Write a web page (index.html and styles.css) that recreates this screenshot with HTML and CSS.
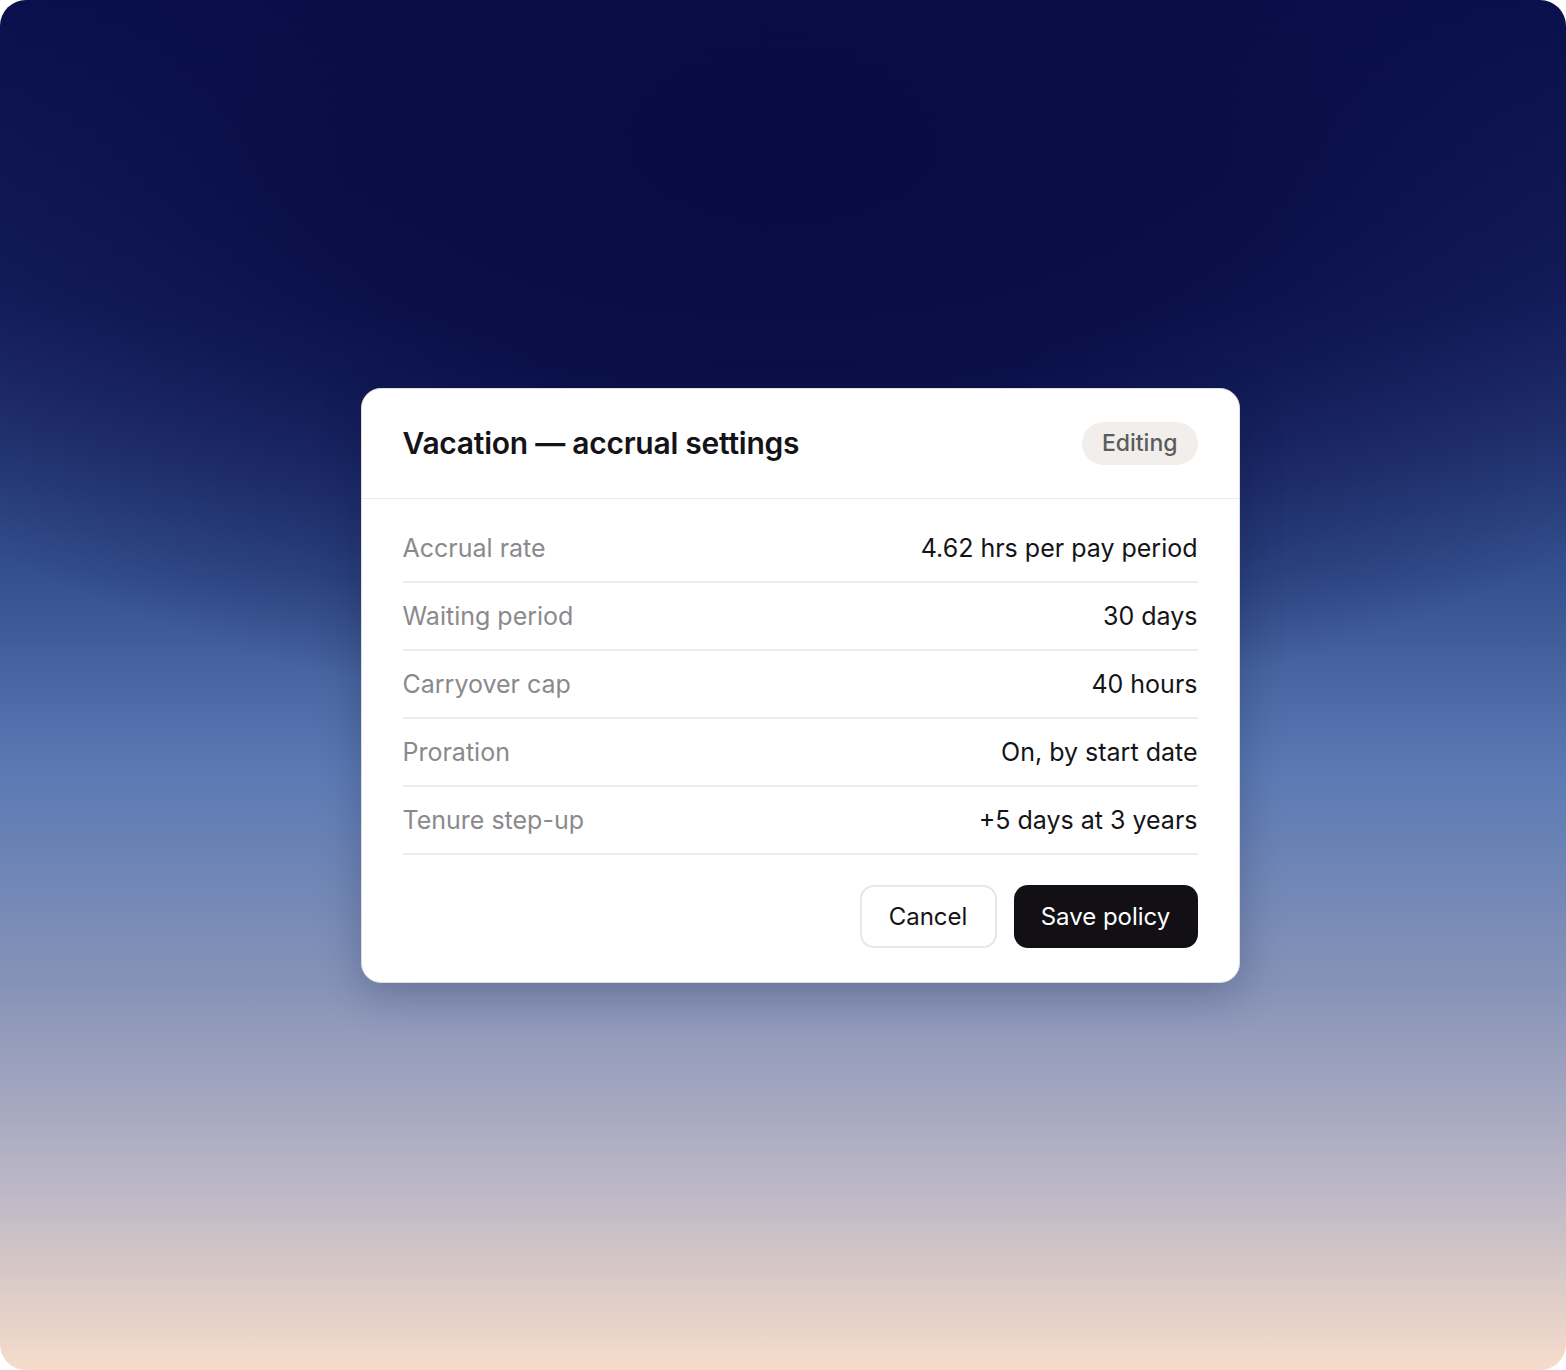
FILE: index.html
```html
<!DOCTYPE html>
<html>
<head>
<meta charset="utf-8">
<link rel="stylesheet" href="styles.css">
</head>
<body>
<div class="frame">
  <div class="card">
    <div class="card-header">
      <h1 class="title">Vacation — accrual settings</h1>
      <span class="badge">Editing</span>
    </div>
    <div class="card-body">
      <div class="row"><span class="label">Accrual rate</span><span class="value">4.62 hrs per pay period</span></div>
      <div class="row"><span class="label">Waiting period</span><span class="value">30 days</span></div>
      <div class="row"><span class="label">Carryover cap</span><span class="value">40 hours</span></div>
      <div class="row"><span class="label">Proration</span><span class="value">On, by start date</span></div>
      <div class="row"><span class="label">Tenure step-up</span><span class="value">+5 days at 3 years</span></div>
      <div class="actions">
        <button class="btn btn-secondary">Cancel</button>
        <button class="btn btn-primary">Save policy</button>
      </div>
    </div>
  </div>
</div>
</body>
</html>
```
FILE: styles.css
```css
html, body {
  margin: 0;
  padding: 0;
  background: #ffffff;
}
body {
  font-family: Inter, "Noto Sans", sans-serif;
}
.frame {
  width: 1566px;
  height: 1370px;
  border-radius: 26px;
  overflow: hidden;
  display: flex;
  align-items: center;
  justify-content: center;
  background:
    radial-gradient(ellipse 1100px 560px at 50% 12%, rgba(8,12,70,1) 0%, rgba(8,12,70,0.9) 40%, rgba(8,12,70,0) 100%),
    linear-gradient(180deg, #0b1250 0%, #1a2663 22%, #34508e 42%, #5a79b3 56%, #8693b8 72%, #b9b5c5 86%, #f6dccb 100%);
}
.card {
  width: 879px;
  background: #ffffff;
  border: 1px solid #e2ddd9;
  border-radius: 20px;
  box-shadow: 0 12px 40px rgba(10, 20, 60, 0.25);
  box-sizing: border-box;
  margin-left: 34px;
}
.card-header {
  height: 110px;
  box-sizing: border-box;
  padding: 0 41px 0 41px;
  display: flex;
  align-items: center;
  justify-content: space-between;
  border-bottom: 1px solid #efeae7;
}
.title {
  margin: 0;
  font-size: 30px;
  font-weight: 600;
  color: #141418;
  letter-spacing: -0.25px;
}
.badge {
  display: inline-flex;
  align-items: center;
  height: 43px;
  padding: 0 20px;
  border-radius: 22px;
  background: #f1eeeb;
  color: #5c5c5e;
  font-size: 23px;
  font-weight: 500;
}
.card-body {
  padding: 16px 41px 34px 41px;
}
.row {
  height: 68px;
  box-sizing: border-box;
  display: flex;
  align-items: center;
  justify-content: space-between;
  border-bottom: 2px solid #f0ecea;
  font-size: 25px;
}
.label {
  color: #8a8a8d;
}
.value {
  color: #141418;
}
.actions {
  display: flex;
  justify-content: flex-end;
  gap: 17px;
  margin-top: 30px;
}
.btn {
  font-family: inherit;
  font-size: 24px;
  height: 63px;
  border-radius: 14px;
  padding: 0;
  white-space: nowrap;
  cursor: pointer;
}
.btn-secondary {
  background: #ffffff;
  border: 2px solid #ebe6e2;
  color: #141418;
  width: 137px;
}
.btn-primary {
  background: #121014;
  border: none;
  color: #ffffff;
  width: 184px;
}
```
